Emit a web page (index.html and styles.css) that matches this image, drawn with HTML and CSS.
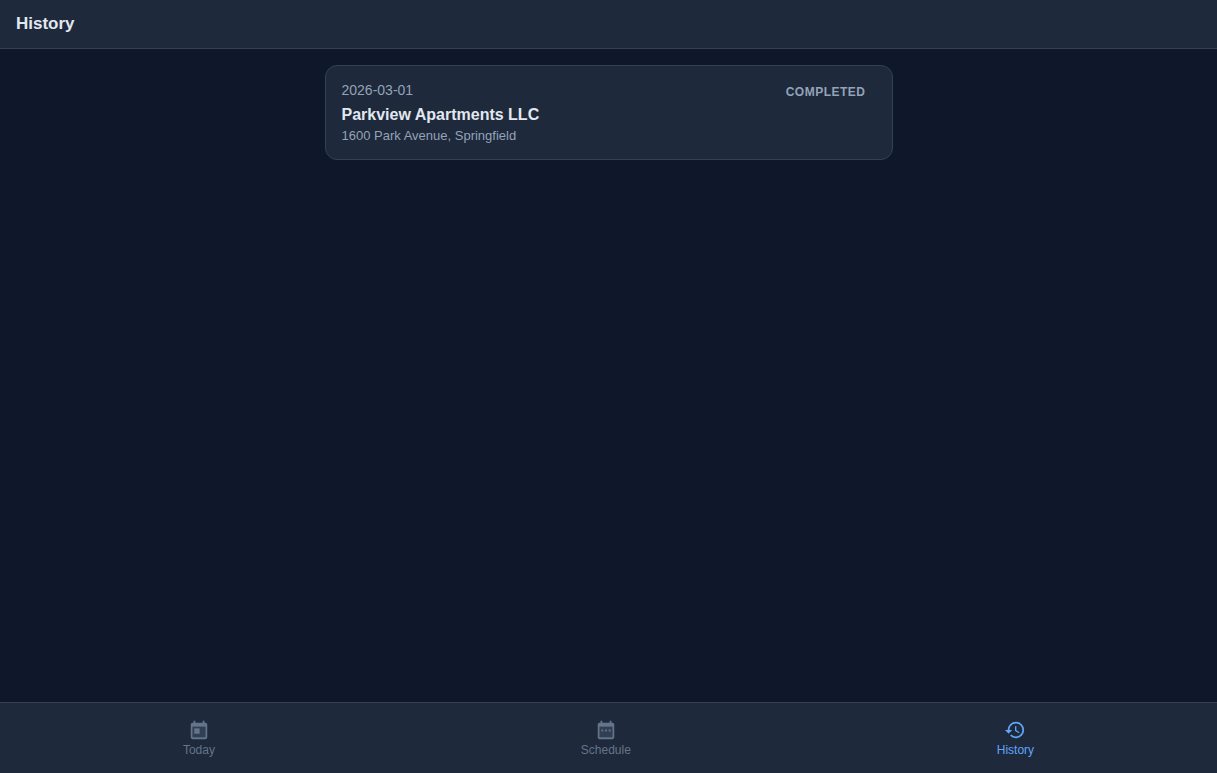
FILE: index.html
```html
<!DOCTYPE html>
<html lang="en">
  <head>
    <meta charset="utf-8" />
    <title>History</title>
    <link rel="stylesheet" href="styles.css">
  </head>
  <body>
    <!-- Header -->
    <header class="app-header">
      <h1>History</h1>
    </header>

    <!-- Visit list -->
    <main class="content">
      <div class="visit-card">
        <div class="visit-info">
          <div class="visit-date">2026-03-01</div>
          <div class="visit-name">Parkview Apartments LLC</div>
          <div class="visit-address">1600 Park Avenue, Springfield</div>
        </div>
        <span class="visit-status">COMPLETED</span>
      </div>
    </main>

    <!-- Bottom navigation -->
    <nav class="bottom-nav">
      <a class="nav-item">
        <svg class="nav-icon" viewBox="0 0 24 24"><path fill-rule="evenodd" d="M5 22c-1.1 0-2-.9-2-2V6c0-1.1.9-2 2-2h1V2h2v2h8V2h2v2h1c1.1 0 2 .9 2 2v14c0 1.1-.9 2-2 2H5zm0-2h14V8.5H5V20z"/><path opacity="0.3" d="M5 8.5h14V20H5z"/><path d="M6.8 10.2h5.9v5.9H6.8z"/></svg>
        <span>Today</span>
      </a>
      <a class="nav-item">
        <svg class="nav-icon" viewBox="0 0 24 24"><path fill-rule="evenodd" d="M5 22c-1.1 0-2-.9-2-2V6c0-1.1.9-2 2-2h1V2h2v2h8V2h2v2h1c1.1 0 2 .9 2 2v14c0 1.1-.9 2-2 2H5zm0-2h14V8.5H5V20z"/><path opacity="0.3" d="M5 8.5h14V20H5z"/><path d="M7 11.5h2v2H7zM11 11.5h2v2h-2zM15 11.5h2v2h-2z"/></svg>
        <span>Schedule</span>
      </a>
      <a class="nav-item active">
        <svg class="nav-icon" viewBox="0 0 24 24"><path d="M13 3a9 9 0 0 0-9 9H1l3.89 3.89.07.14L9 12H6c0-3.87 3.13-7 7-7s7 3.13 7 7-3.13 7-7 7c-1.93 0-3.68-.79-4.94-2.06l-1.42 1.42A8.954 8.954 0 0 0 13 21a9 9 0 0 0 0-18zm-1 5v5l4.28 2.54.72-1.21-3.5-2.08V8H12z"/></svg>
        <span>History</span>
      </a>
    </nav>
  </body>
</html>
```

FILE: styles.css
```css
/* Page */
html, body {
  height: 100%;
}
body {
  margin: 0;
  display: flex;
  flex-direction: column;
  font-family: "Liberation Sans", Arial, sans-serif;
  background-color: #0f172a;
  color: #e2e8f0;
}

/* Header */
.app-header {
  flex: none;
  height: 48px;
  display: flex;
  align-items: center;
  padding: 0 16px;
  background-color: #1e293b;
  border-bottom: 1px solid #334155;
}
.app-header h1 {
  margin: 0;
  font-size: 17px;
  font-weight: 700;
  color: #e2e8f0;
}

/* Main list */
.content {
  flex: 1;
  box-sizing: border-box;
  width: 100%;
  max-width: 600px;
  margin: 0 auto;
  padding: 16px;
}

/* Visit card */
.visit-card {
  display: flex;
  justify-content: space-between;
  align-items: flex-start;
  padding: 16px;
  background-color: #1e293b;
  border: 1px solid #334155;
  border-radius: 12px;
}
.visit-date {
  font-size: 14px;
  line-height: 16px;
  color: #94a3b8;
  margin-bottom: 8px;
}
.visit-name {
  font-size: 16px;
  line-height: 18px;
  font-weight: 700;
  color: #e2e8f0;
  margin-bottom: 4px;
}
.visit-address {
  font-size: 13px;
  line-height: 15px;
  color: #94a3b8;
}
.visit-status {
  padding: 3px 10px 0 0;
  font-size: 12px;
  line-height: 14px;
  font-weight: 700;
  letter-spacing: 0.5px;
  color: #94a3b8;
}

/* Bottom navigation */
.bottom-nav {
  flex: none;
  height: 70px;
  display: flex;
  justify-content: space-around;
  align-items: center;
  background-color: #1e293b;
  border-top: 1px solid #334155;
}
.nav-item {
  display: flex;
  flex-direction: column;
  align-items: center;
  gap: 2px;
  font-size: 12px;
  line-height: 14px;
  color: #64748b;
}
.nav-item.active {
  color: #60a5fa;
}
.nav-icon {
  width: 22px;
  height: 22px;
  fill: currentColor;
}
```
